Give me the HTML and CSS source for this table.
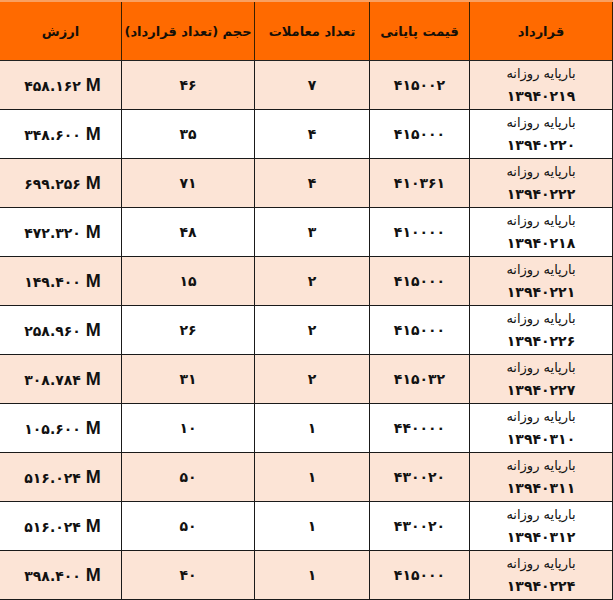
FILE: index.html
```html
<!DOCTYPE html>
<html lang="fa" dir="rtl">
<head>
<meta charset="utf-8">
<link rel="stylesheet" href="styles.css">
</head>
<body>
<table class="grid">
  <colgroup>
    <col class="c-contract"><col class="c-price"><col class="c-count"><col class="c-vol"><col class="c-val">
  </colgroup>
  <thead>
    <tr>
      <th>قرارداد</th>
      <th>قیمت پایانی</th>
      <th>تعداد معاملات</th>
      <th>حجم (تعداد قرارداد)</th>
      <th>ارزش</th>
    </tr>
  </thead>
  <tbody>
    <tr class="alt"><td class="name">بارپایه روزانه<br><span class="code">۱۳۹۴۰۲۱۹</span></td><td>۴۱۵۰۰۲</td><td>۷</td><td>۴۶</td><td class="val" dir="ltr">۴۵۸.۱۶۲ <b>M</b></td></tr>
    <tr><td class="name">بارپایه روزانه<br><span class="code">۱۳۹۴۰۲۲۰</span></td><td>۴۱۵۰۰۰</td><td>۴</td><td>۳۵</td><td class="val" dir="ltr">۳۴۸.۶۰۰ <b>M</b></td></tr>
    <tr class="alt"><td class="name">بارپایه روزانه<br><span class="code">۱۳۹۴۰۲۲۲</span></td><td>۴۱۰۳۶۱</td><td>۴</td><td>۷۱</td><td class="val" dir="ltr">۶۹۹.۲۵۶ <b>M</b></td></tr>
    <tr><td class="name">بارپایه روزانه<br><span class="code">۱۳۹۴۰۲۱۸</span></td><td>۴۱۰۰۰۰</td><td>۳</td><td>۴۸</td><td class="val" dir="ltr">۴۷۲.۳۲۰ <b>M</b></td></tr>
    <tr class="alt"><td class="name">بارپایه روزانه<br><span class="code">۱۳۹۴۰۲۲۱</span></td><td>۴۱۵۰۰۰</td><td>۲</td><td>۱۵</td><td class="val" dir="ltr">۱۴۹.۴۰۰ <b>M</b></td></tr>
    <tr><td class="name">بارپایه روزانه<br><span class="code">۱۳۹۴۰۲۲۶</span></td><td>۴۱۵۰۰۰</td><td>۲</td><td>۲۶</td><td class="val" dir="ltr">۲۵۸.۹۶۰ <b>M</b></td></tr>
    <tr class="alt"><td class="name">بارپایه روزانه<br><span class="code">۱۳۹۴۰۲۲۷</span></td><td>۴۱۵۰۳۲</td><td>۲</td><td>۳۱</td><td class="val" dir="ltr">۳۰۸.۷۸۴ <b>M</b></td></tr>
    <tr><td class="name">بارپایه روزانه<br><span class="code">۱۳۹۴۰۳۱۰</span></td><td>۴۴۰۰۰۰</td><td>۱</td><td>۱۰</td><td class="val" dir="ltr">۱۰۵.۶۰۰ <b>M</b></td></tr>
    <tr class="alt"><td class="name">بارپایه روزانه<br><span class="code">۱۳۹۴۰۳۱۱</span></td><td>۴۳۰۰۲۰</td><td>۱</td><td>۵۰</td><td class="val" dir="ltr">۵۱۶.۰۲۴ <b>M</b></td></tr>
    <tr><td class="name">بارپایه روزانه<br><span class="code">۱۳۹۴۰۳۱۲</span></td><td>۴۳۰۰۲۰</td><td>۱</td><td>۵۰</td><td class="val" dir="ltr">۵۱۶.۰۲۴ <b>M</b></td></tr>
    <tr class="alt"><td class="name">بارپایه روزانه<br><span class="code">۱۳۹۴۰۲۲۴</span></td><td>۴۱۵۰۰۰</td><td>۱</td><td>۴۰</td><td class="val" dir="ltr">۳۹۸.۴۰۰ <b>M</b></td></tr>
  </tbody>
</table>
</body>
</html>
```
FILE: styles.css
```css
html, body {
  margin: 0;
  padding: 0;
  background: #ffffff;
}
.grid {
  border-collapse: collapse;
  table-layout: fixed;
  width: 613px;
  font-family: "DejaVu Sans", sans-serif;
  color: #111;
}
.c-contract { width: 143px; }
.c-price { width: 100px; }
.c-count { width: 115px; }
.c-vol { width: 133px; }
.c-val { width: 122px; }

.grid th {
  background: #ff6a00;
  height: 58px;
  padding: 0;
  font-size: 13px;
  font-weight: bold;
  color: #151008;
  border-left: 1px solid #3a2000;
  border-right: 1px solid #3a2000;
  border-top: 2px solid #f9a060;
  border-bottom: 1px solid #222;
  text-align: center;
  white-space: nowrap;
}
.grid td {
  height: 47px;
  padding: 0;
  border: 1px solid #1a1a1a;
  text-align: center;
  font-size: 14px;
  font-weight: bold;
  background: #ffffff;
}
.grid tr.alt td { background: #fce4d6; }
.grid td.name {
  font-weight: normal;
  font-size: 13px;
  line-height: 23px;
  vertical-align: top;
  padding-top: 1px;
}
.grid td.name .code {
  font-size: 14px;
  font-weight: bold;
  letter-spacing: 0.5px;
}
.grid td.val {
  font-size: 14px;
  padding-left: 4px;
}
.grid td.val b {
  font-family: "Liberation Sans", Arial, sans-serif;
  font-size: 18px;
  font-weight: bold;
}
```
